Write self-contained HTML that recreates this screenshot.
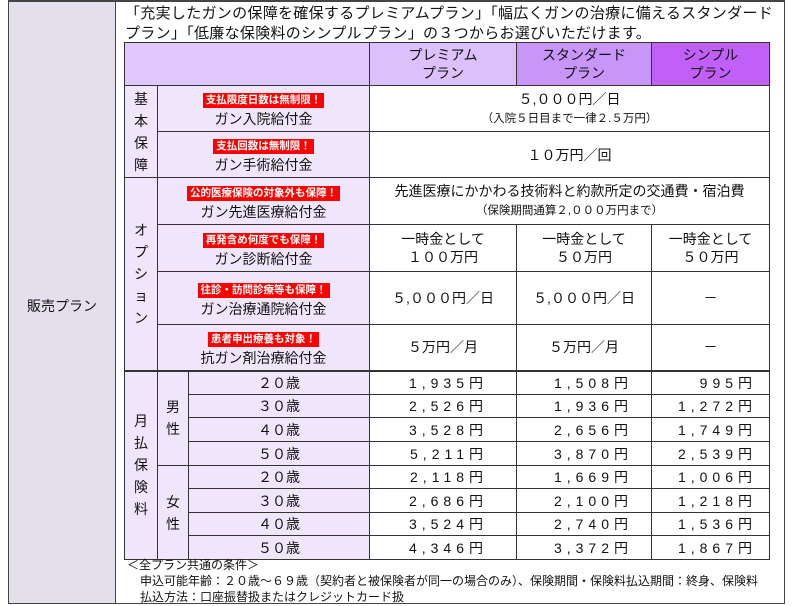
<!DOCTYPE html>
<html><head><meta charset="utf-8"><style>
*{margin:0;padding:0;box-sizing:border-box}
body{width:793px;height:606px;background:#fff;font-family:"Liberation Sans","Noto Sans CJK JP",sans-serif;color:#111;position:relative;overflow:hidden}
.frame{position:absolute;left:8px;top:0;width:777px;height:604px;border:1px solid #444;border-top:2px solid #444}
.left{position:absolute;left:8px;top:0;width:108px;height:604px;background:#e4dfec;border:1px solid #444;border-top:2px solid #444}
.left span{position:absolute;left:0;width:100%;top:294px;text-align:center;font-size:14px}
.intro{position:absolute;left:125px;top:4px;font-size:15px;line-height:20px;width:650px;letter-spacing:0.3px}
table{position:absolute;left:124px;top:42px;border-collapse:collapse;table-layout:fixed;width:645px}
td{border:1px solid #333;font-size:14px;text-align:center;vertical-align:middle;line-height:18px;padding:0}
.lav{background:#f0e6fc}
.h0{background:#e0c8fc}
.h1{background:#dcc0fc}
.h2{background:#c896f8}
.h3{background:#c060f8}
.b{display:inline-block;background:#ff0000;color:#fff;font-size:10.5px;font-weight:bold;line-height:15px;padding:0 3px;margin-bottom:2px}
.v{line-height:22px}
.r{text-align:right;padding-right:28px;letter-spacing:5px}
.r2{text-align:right;padding-right:18px;letter-spacing:5px}
.r3{text-align:right;padding-right:12px;letter-spacing:5px}
.sm{font-size:11.5px}
.foot{position:absolute;left:127px;top:557px;font-size:12px;line-height:16px}
.foot div{padding-left:13px}
</style></head><body>
<div class="frame"></div>
<div class="left"><span>販売プラン</span></div>
<div class="intro">「充実したガンの保障を確保するプレミアムプラン」「幅広くガンの治療に備えるスタンダード<br>プラン」「低廉な保険料のシンプルプラン」の３つからお選びいただけます。</div>
<table>
<colgroup><col style="width:33px"><col style="width:31px"><col style="width:181px"><col style="width:147px"><col style="width:135px"><col style="width:118px"></colgroup>
<tr style="height:43px"><td colspan="3" class="h0"></td><td class="h1">プレミアム<br>プラン</td><td class="h2">スタンダード<br>プラン</td><td class="h3">シンプル<br>プラン</td></tr>
<tr style="height:46px"><td rowspan="2" class="lav v">基<br>本<br>保<br>障</td><td colspan="2" class="lav"><span class="b">支払限度日数は無制限！</span><br>ガン入院給付金</td><td colspan="3">５,０００円／日<br><span class="sm">（入院５日目まで一律２.５万円）</span></td></tr>
<tr style="height:46px"><td colspan="2" class="lav"><span class="b">支払回数は無制限！</span><br>ガン手術給付金</td><td colspan="3">１０万円／回</td></tr>
<tr style="height:47px"><td rowspan="4" class="lav v">オ<br>プ<br>シ<br>ョ<br>ン</td><td colspan="2" class="lav"><span class="b">公的医療保険の対象外も保障！</span><br>ガン先進医療給付金</td><td colspan="3">先進医療にかかわる技術料と約款所定の交通費・宿泊費<br><span class="sm">（保険期間通算２,０００万円まで）</span></td></tr>
<tr style="height:47px"><td colspan="2" class="lav"><span class="b">再発含め何度でも保障！</span><br>ガン診断給付金</td><td>一時金として<br>１００万円</td><td>一時金として<br>５０万円</td><td>一時金として<br>５０万円</td></tr>
<tr style="height:53px"><td colspan="2" class="lav"><span class="b">往診・訪問診療等も保障！</span><br>ガン治療通院給付金</td><td>５,０００円／日</td><td>５,０００円／日</td><td>－</td></tr>
<tr style="height:46px"><td colspan="2" class="lav"><span class="b">患者申出療養も対象！</span><br>抗ガン剤治療給付金</td><td>５万円／月</td><td>５万円／月</td><td>－</td></tr>
<tr style="height:24px"><td rowspan="8" class="lav v" style="border-top:2px solid #333">月<br>払<br>保<br>険<br>料</td><td rowspan="4" class="lav v" style="border-top:2px solid #333">男<br>性</td><td class="lav" style="border-top:2px solid #333">２０歳</td><td class="r" style="border-top:2px solid #333">1,935円</td><td class="r2" style="border-top:2px solid #333">1,508円</td><td class="r3" style="border-top:2px solid #333">995円</td></tr>
<tr style="height:23px"><td class="lav">３０歳</td><td class="r">2,526円</td><td class="r2">1,936円</td><td class="r3">1,272円</td></tr>
<tr style="height:24px"><td class="lav">４０歳</td><td class="r">3,528円</td><td class="r2">2,656円</td><td class="r3">1,749円</td></tr>
<tr style="height:24px"><td class="lav">５０歳</td><td class="r">5,211円</td><td class="r2">3,870円</td><td class="r3">2,539円</td></tr>
<tr style="height:23px"><td rowspan="4" class="lav v">女<br>性</td><td class="lav">２０歳</td><td class="r">2,118円</td><td class="r2">1,669円</td><td class="r3">1,006円</td></tr>
<tr style="height:24px"><td class="lav">３０歳</td><td class="r">2,686円</td><td class="r2">2,100円</td><td class="r3">1,218円</td></tr>
<tr style="height:23px"><td class="lav">４０歳</td><td class="r">3,524円</td><td class="r2">2,740円</td><td class="r3">1,536円</td></tr>
<tr style="height:24px"><td class="lav">５０歳</td><td class="r">4,346円</td><td class="r2">3,372円</td><td class="r3">1,867円</td></tr>
</table>
<div class="foot">＜全プラン共通の条件＞<div>申込可能年齢：２０歳～６９歳（契約者と被保険者が同一の場合のみ）、保険期間・保険料払込期間：終身、保険料</div><div>払込方法：口座振替扱またはクレジットカード扱</div></div>
</body></html>
